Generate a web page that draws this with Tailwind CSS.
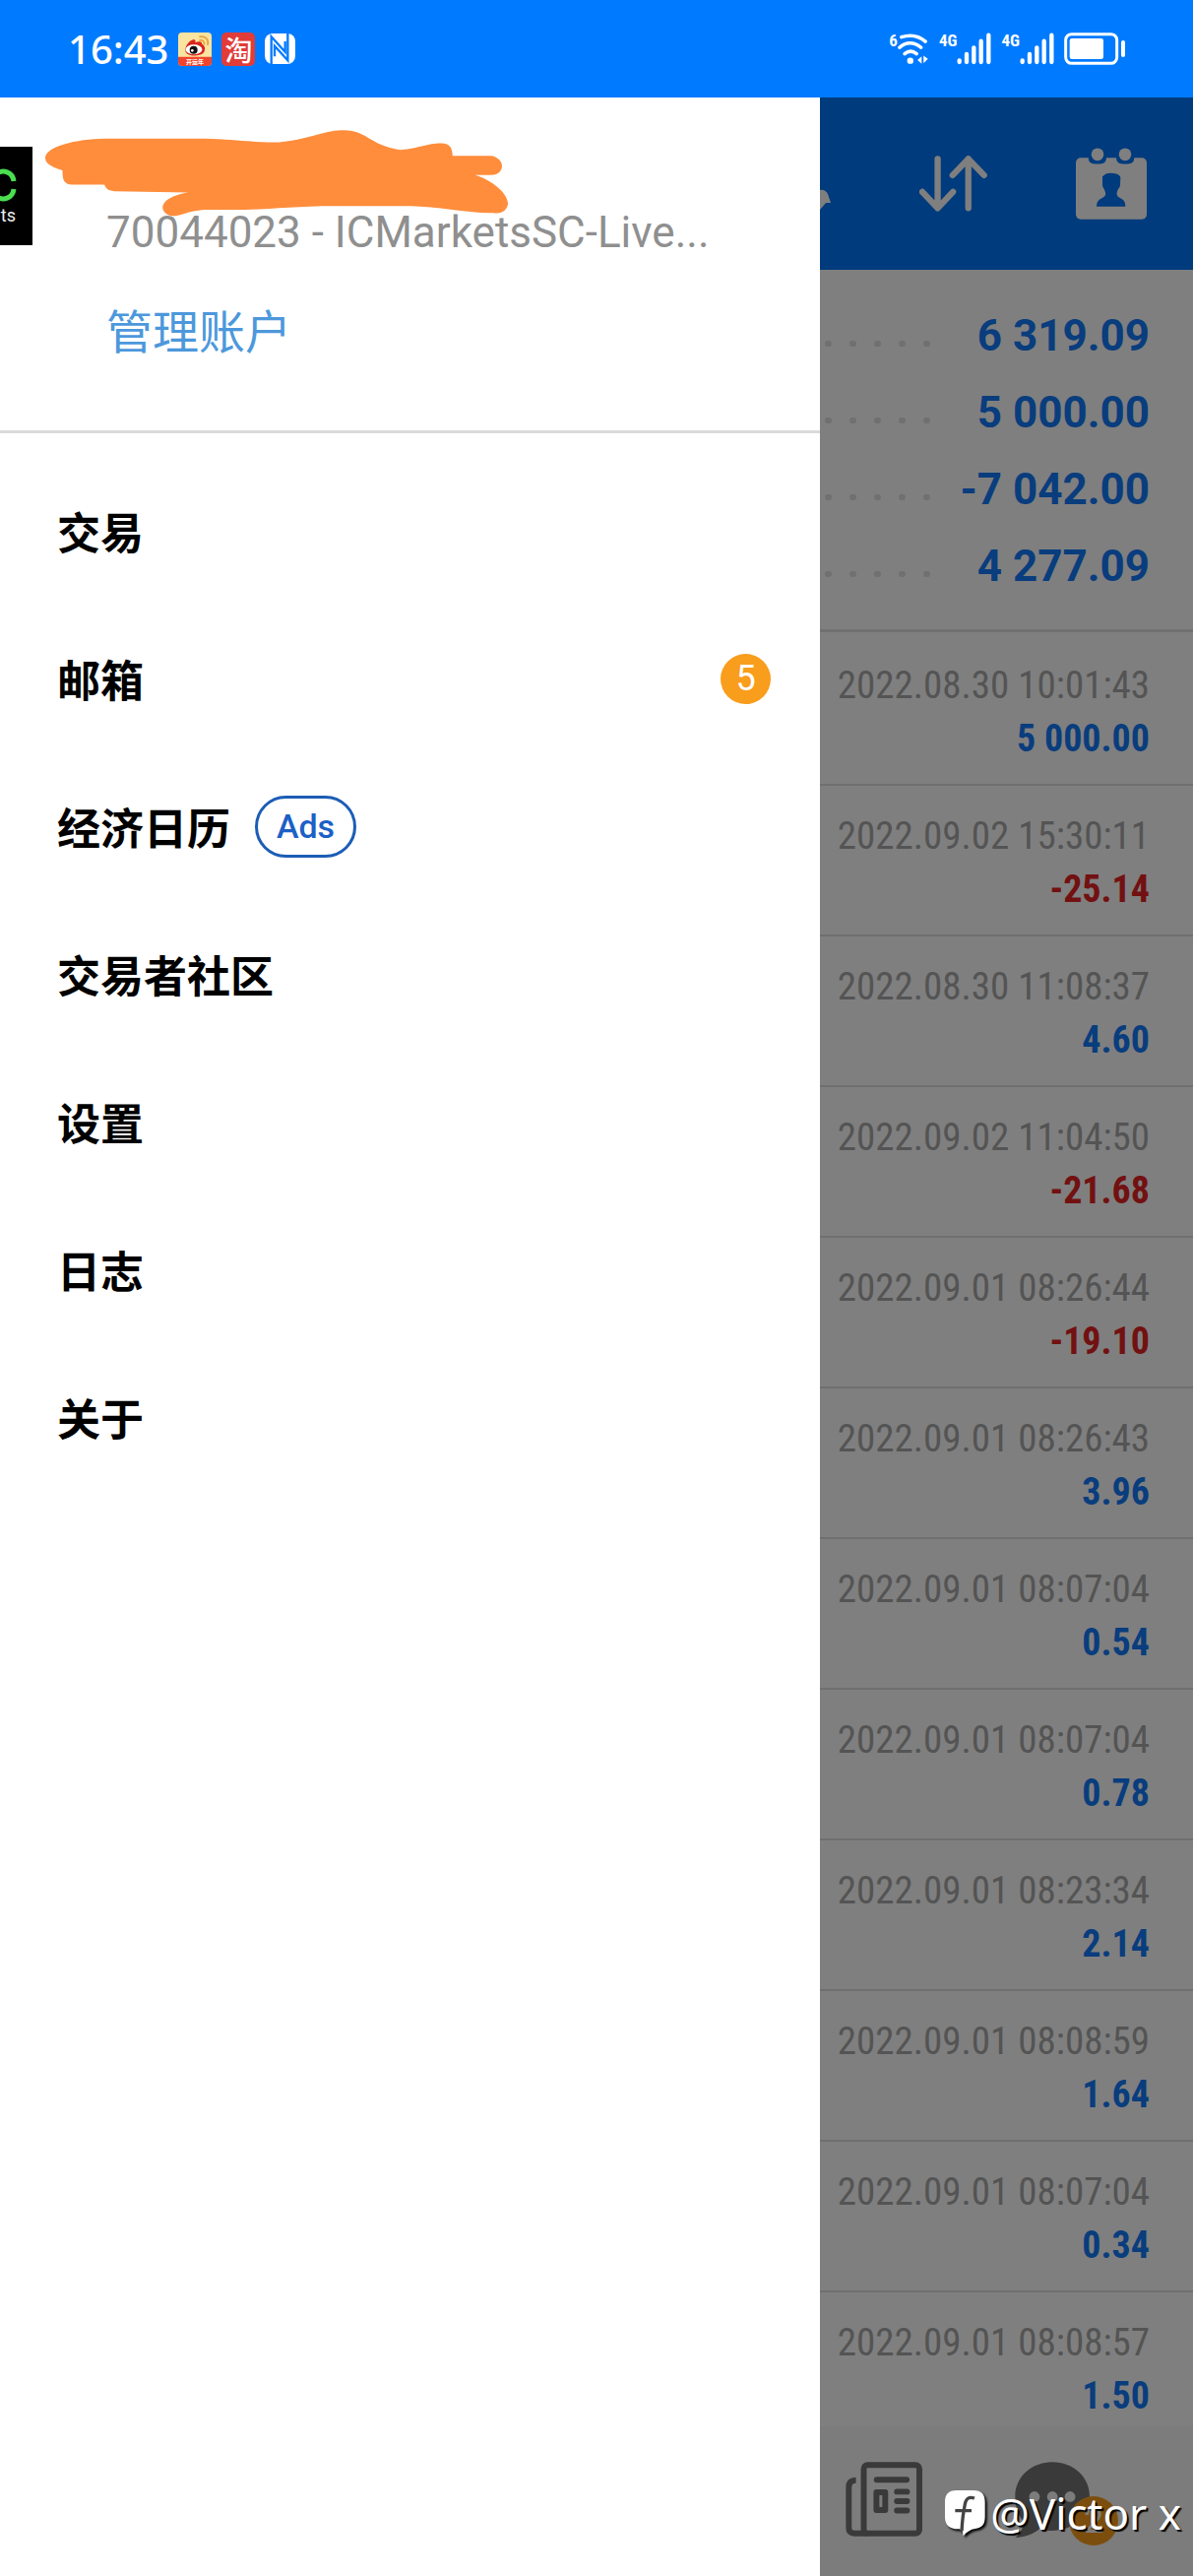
<!DOCTYPE html>
<html lang="zh-CN">
<head>
    <meta charset="UTF-8">
    <meta name="viewport" content="width=device-width, initial-scale=1.0">
    <title>账户</title>
    <script src="https://cdn.jsdelivr.net/npm/@tailwindcss/browser@4"></script>
</head>
<body class="h-screen flex flex-col overflow-hidden bg-white font-[Roboto,'Noto_Sans_CJK_SC',sans-serif]">

    <!-- Status bar -->
    <div class="h-[99px] shrink-0 bg-[#007aff] text-white flex items-center justify-between pl-[69px] pr-[69px]">
        <div class="flex items-center gap-[10px]">
            <span class="font-['Noto_Sans',sans-serif] font-medium text-[40px] leading-[48px]">16:43</span>
            <svg class="w-[34px] h-[34px]" viewBox="0 0 102 102">
                <rect width="102" height="102" rx="12" fill="#fbe3a0"/>
                <path d="M0 74h102v16a12 12 0 0 1-12 12H12A12 12 0 0 1 0 90z" fill="#f0442c"/>
                <path d="M22 54C22 36 40 18 50 22c4 2 3 7 2 9 9-5 22-5 21 5 12 5 10 22 2 28-12 10-53 10-53-10z" fill="#d8261c"/>
                <ellipse cx="48" cy="52" rx="25" ry="15" fill="#fff"/>
                <circle cx="47" cy="53" r="12" fill="#111"/>
                <circle cx="43" cy="55" r="4" fill="#fff"/>
                <path d="M66 13c16-4 28 8 24 24M66 24c9-2 15 4 13 12" fill="none" stroke="#e9a23b" stroke-width="5" stroke-linecap="round"/>
                <text x="51" y="96" text-anchor="middle" font-size="18" font-weight="700" fill="#fff" font-family="Noto Sans CJK SC">开运年</text>
            </svg>
            <span class="w-[34px] h-[34px] rounded-[5px] bg-[#e23c38] text-[28px] leading-[34px] text-center font-medium font-['Noto_Sans_CJK_SC',sans-serif]">淘</span>
            <svg class="w-[31px] h-[31px]" viewBox="0 0 93 93">
                <rect width="93" height="93" rx="24" fill="#fff"/>
                <path d="M20 93V10L62 56V24M70 0V82L30 38V70" fill="none" stroke="#007aff" stroke-width="7"/>
            </svg>
        </div>
        <div class="flex items-center gap-[10px]">
            <div class="flex items-start">
                <span class="font-['Roboto_Condensed',Roboto,sans-serif] font-bold text-[17px] leading-[16px]">6</span>
                <svg class="w-[32px] h-[33px]" viewBox="0 0 100 100">
                    <g fill="none" stroke="#fff" stroke-linecap="round" stroke-width="11">
                        <path d="M12 13c28-9 54-5 76 14"/>
                        <path d="M6 46c20-19 46-19 68 0"/>
                        <path d="M22 66c12-10 26-10 38 0"/>
                    </g>
                    <circle cx="40" cy="88" r="10" fill="#fff"/>
                    <path d="M63 86l13-12v24zM96 82L82 72v24z" fill="#fff"/>
                </svg>
            </div>
            <div class="flex items-start">
                <span class="font-['Roboto_Condensed',Roboto,sans-serif] font-bold text-[17px] leading-[16px]">4G</span>
                <svg class="w-[35px] h-[33px]" viewBox="0 0 105 99" fill="none" stroke="#fff" stroke-width="13" stroke-linecap="round">
                    <path d="M8 85v5M30 66v24M52 46v44M74 26v64M97 8v82"/>
                </svg>
            </div>
            <div class="flex items-start">
                <span class="font-['Roboto_Condensed',Roboto,sans-serif] font-bold text-[17px] leading-[16px]">4G</span>
                <svg class="w-[35px] h-[33px]" viewBox="0 0 105 99" fill="none" stroke="#fff" stroke-width="13" stroke-linecap="round">
                    <path d="M8 85v5M30 66v24M52 46v44M74 26v64M97 8v82"/>
                </svg>
            </div>
            <svg class="w-[62px] h-[33px]" viewBox="0 0 186 99">
                <rect x="5" y="5" width="156" height="89" rx="18" fill="none" stroke="#fff" stroke-width="9"/>
                <rect x="17" y="18" width="103" height="63" rx="7" fill="#fff"/>
                <rect x="174" y="24" width="12" height="51" rx="6" fill="#fff"/>
            </svg>
        </div>
    </div>

    <div class="relative flex-1 min-h-0 flex flex-col">

        <!-- Page header -->
        <header class="h-[175px] shrink-0 bg-[#0076fa] text-white flex items-center justify-end gap-[90px] pr-[47px]">
            <button type="button" aria-label="图表">
                <svg class="block w-[70px] h-[57px]" viewBox="0 0 70 57">
                    <path d="M4 50L30 14l14 28 15-7q5-1 8 4l3 9h-5l-6 7-16 2L28 26 10 54z" fill="currentColor"/>
                </svg>
            </button>
            <button type="button" aria-label="排序">
                <svg class="block w-[69px] h-[57px]" viewBox="342 204 208 172" fill="none" stroke="currentColor" stroke-width="19" stroke-linecap="round" stroke-linejoin="round">
                    <path d="M398 214v151M351 315l47 50 47-50M492 365V214M444 264l48-50 48 50"/>
                </svg>
            </button>
            <button type="button" aria-label="联系人">
                <svg class="block w-[72px] h-[73px]" viewBox="819 175 216 218">
                    <rect x="819" y="205" width="216" height="188" rx="15" fill="currentColor"/>
                    <path d="M857 200h55v4q0 20-20 20h-15q-20 0-20-20zM942 200h55v4q0 20-20 20h-15q-20 0-20-20z" fill="#0076fa"/>
                    <circle cx="885" cy="195" r="19" fill="currentColor"/>
                    <circle cx="969" cy="195" r="19" fill="currentColor"/>
                    <path d="M900 262c8-8 18-11 28-10 14 1 26 5 27 14l-1 22c0 8-6 10-8 17-3 8-3 14 1 18 10 8 23 8 23 31h-88c1-23 14-23 24-31 5-4 4-11 1-18-2-7-7-9-7-17z" fill="#0076fa"/>
                </svg>
            </button>
        </header>

        <!-- Account summary -->
        <dl class="shrink-0 border-b-3 border-[#e0e0e0] pt-[28px] pb-[25px] px-[44px] text-[44px] font-bold text-[#127bfa] text-right">
            <div class="flex h-[78px] items-center">
                <dt class="flex-1 h-[6px] mt-[16px] bg-[radial-gradient(circle,#e0e0e0_3px,transparent_4px)] bg-size-[25px_6px] bg-right"></dt>
                <dd class="w-[214px]">6 319.09</dd>
            </div>
            <div class="flex h-[78px] items-center">
                <dt class="flex-1 h-[6px] mt-[16px] bg-[radial-gradient(circle,#e0e0e0_3px,transparent_4px)] bg-size-[25px_6px] bg-right"></dt>
                <dd class="w-[214px]">5 000.00</dd>
            </div>
            <div class="flex h-[78px] items-center">
                <dt class="flex-1 h-[6px] mt-[16px] bg-[radial-gradient(circle,#e0e0e0_3px,transparent_4px)] bg-size-[25px_6px] bg-right"></dt>
                <dd class="w-[214px]">-7 042.00</dd>
            </div>
            <div class="flex h-[78px] items-center">
                <dt class="flex-1 h-[6px] mt-[16px] bg-[radial-gradient(circle,#e0e0e0_3px,transparent_4px)] bg-size-[25px_6px] bg-right"></dt>
                <dd class="w-[214px]">4 277.09</dd>
            </div>
        </dl>

        <!-- History -->
        <ul class="flex-1 min-h-0 overflow-hidden pt-[3px] text-right text-[39px] leading-[54px] font-['Roboto_Condensed',Roboto,sans-serif]">
            <li class="border-b-2 border-[#dedede] pt-6 pb-[19px] px-[44px]">
                <p class="text-[#a8a8a8]">2022.08.30 10:01:43</p>
                <p class="font-bold text-[38px] text-[#127bfa]">5 000.00</p>
            </li>
            <li class="border-b-2 border-[#dedede] pt-6 pb-[19px] px-[44px]">
                <p class="text-[#a8a8a8]">2022.09.02 15:30:11</p>
                <p class="font-bold text-[38px] text-[#e42222]">-25.14</p>
            </li>
            <li class="border-b-2 border-[#dedede] pt-6 pb-[19px] px-[44px]">
                <p class="text-[#a8a8a8]">2022.08.30 11:08:37</p>
                <p class="font-bold text-[38px] text-[#127bfa]">4.60</p>
            </li>
            <li class="border-b-2 border-[#dedede] pt-6 pb-[19px] px-[44px]">
                <p class="text-[#a8a8a8]">2022.09.02 11:04:50</p>
                <p class="font-bold text-[38px] text-[#e42222]">-21.68</p>
            </li>
            <li class="border-b-2 border-[#dedede] pt-6 pb-[19px] px-[44px]">
                <p class="text-[#a8a8a8]">2022.09.01 08:26:44</p>
                <p class="font-bold text-[38px] text-[#e42222]">-19.10</p>
            </li>
            <li class="border-b-2 border-[#dedede] pt-6 pb-[19px] px-[44px]">
                <p class="text-[#a8a8a8]">2022.09.01 08:26:43</p>
                <p class="font-bold text-[38px] text-[#127bfa]">3.96</p>
            </li>
            <li class="border-b-2 border-[#dedede] pt-6 pb-[19px] px-[44px]">
                <p class="text-[#a8a8a8]">2022.09.01 08:07:04</p>
                <p class="font-bold text-[38px] text-[#127bfa]">0.54</p>
            </li>
            <li class="border-b-2 border-[#dedede] pt-6 pb-[19px] px-[44px]">
                <p class="text-[#a8a8a8]">2022.09.01 08:07:04</p>
                <p class="font-bold text-[38px] text-[#127bfa]">0.78</p>
            </li>
            <li class="border-b-2 border-[#dedede] pt-6 pb-[19px] px-[44px]">
                <p class="text-[#a8a8a8]">2022.09.01 08:23:34</p>
                <p class="font-bold text-[38px] text-[#127bfa]">2.14</p>
            </li>
            <li class="border-b-2 border-[#dedede] pt-6 pb-[19px] px-[44px]">
                <p class="text-[#a8a8a8]">2022.09.01 08:08:59</p>
                <p class="font-bold text-[38px] text-[#127bfa]">1.64</p>
            </li>
            <li class="border-b-2 border-[#dedede] pt-6 pb-[19px] px-[44px]">
                <p class="text-[#a8a8a8]">2022.09.01 08:07:04</p>
                <p class="font-bold text-[38px] text-[#127bfa]">0.34</p>
            </li>
            <li class="pt-6 px-[44px]">
                <p class="text-[#a8a8a8]">2022.09.01 08:08:57</p>
                <p class="font-bold text-[38px] text-[#127bfa]">1.50</p>
            </li>
        </ul>

        <!-- Tab bar -->
        <nav class="h-[152px] shrink-0 bg-[#f8f8f8] text-[#757575] flex items-center justify-end gap-[94px] pr-[104px] pb-[4px]">
            <button type="button" aria-label="新闻">
                <svg class="block w-[78px] h-[76px]" viewBox="118 510 236 228" fill="none" stroke="currentColor">
                    <rect x="174" y="519" width="171" height="210" rx="12" stroke-width="18"/>
                    <path d="M150 566q-22 0-22 22v124q0 17 17 17h40" stroke-width="18"/>
                    <path d="M214 564h92M276 601h31M276 630h31M276 659h31" stroke-width="18" stroke-linecap="round"/>
                    <rect x="213" y="603" width="27" height="54" stroke-width="18" stroke-linejoin="round"/>
                </svg>
            </button>
            <button type="button" aria-label="消息" class="relative">
                <svg class="block w-[77px] h-[77px]" viewBox="638 510 226 228">
                    <path d="M750 511c62 0 112 44 112 103s-50 103-112 103c-14 0-26-2-38-6-20 16-46 26-74 27 14-10 24-28 26-47-16-19-26-45-26-77 0-59 50-103 112-103z" fill="currentColor"/>
                    <g fill="#f8f8f8"><circle cx="696" cy="615" r="16"/><circle cx="750" cy="615" r="16"/><circle cx="803" cy="615" r="16"/></g>
                </svg>
                <span class="absolute left-[55px] top-[35px] w-[50px] h-[50px] rounded-full bg-[#f99d1c] text-white text-[36px] leading-[50px] text-center">2</span>
            </button>
        </nav>

        <!-- Dimmed backdrop -->
        <div class="absolute inset-0 bg-black/50"></div>

        <!-- Drawer -->
        <aside class="absolute inset-y-0 left-0 w-[833px] bg-white overflow-hidden">
            <div class="h-[341px] border-b-3 border-[#d9dada] flex gap-[75px]">
                <svg class="w-[33px] h-[100px] mt-[50px] shrink-0" viewBox="0 0 33 100">
                    <rect width="33" height="100" fill="#000"/>
                    <path d="M-4 28C3 22 13 26 14 35M-4 50C3 56 13 52 14 43" fill="none" stroke="#4ade50" stroke-width="5"/>
                    <text x="16" y="76" text-anchor="end" font-size="18" fill="#eee" font-family="Roboto">ts</text>
                </svg>
                <div class="relative flex-1 min-w-0 pt-[109px] pr-[90px]">
                    <!-- Redaction scribble -->
                    <svg class="absolute -left-[63px] top-[33px] w-[472px] h-[88px]" viewBox="93 95 974 262" preserveAspectRatio="none">
                        <path d="M95 180C95 145 160 122 220 121H430C500 124 540 134 585 132 640 126 680 97 715 96 770 92 770 140 840 155 880 150 895 135 925 135 945 136 948 150 949 173H1030C1060 180 1060 230 1030 231H996C1030 245 1065 285 1065 320 1060 346 1050 347 1030 346 970 345 920 326 860 325H700C620 325 560 336 500 336H430C390 340 380 356 360 355 335 350 325 300 395 284L240 280C225 278 222 270 219 260H150C130 258 132 235 131 217 115 210 95 200 95 180Z" fill="#ff8d3c"/>
                    </svg>
                    <p class="truncate text-[44px] leading-[56px] text-[#8f8f8f]">70044023 - ICMarketsSC-Live...</p>
                    <a href="#" class="block mt-[41px] text-[47px] leading-[66px] text-[#4c98dc]">管理账户</a>
                </div>
            </div>
            <nav class="pt-6 text-[44px] font-bold text-black font-['Noto_Sans_CJK_SC',sans-serif]">
                <a href="#" class="flex items-center h-[150px] pl-[58px] pr-[50px]">交易</a>
                <a href="#" class="flex items-center justify-between h-[150px] pl-[58px] pr-[50px]">
                    邮箱
                    <span class="w-[51px] h-[51px] rounded-full bg-[#f99d1c] text-white text-[36px] leading-[51px] text-center font-normal font-[Roboto,sans-serif]">5</span>
                </a>
                <a href="#" class="flex items-center gap-[25px] h-[150px] pl-[58px] pr-[50px]">
                    经济日历
                    <span class="w-[103px] h-[63px] rounded-full border-3 border-[#1c5db5] text-[#1c60c6] text-[34px] leading-[57px] text-center font-medium font-[Roboto,sans-serif]">Ads</span>
                </a>
                <a href="#" class="flex items-center h-[150px] pl-[58px] pr-[50px]">交易者社区</a>
                <a href="#" class="flex items-center h-[150px] pl-[58px] pr-[50px]">设置</a>
                <a href="#" class="flex items-center h-[150px] pl-[58px] pr-[50px]">日志</a>
                <a href="#" class="flex items-center h-[150px] pl-[58px] pr-[50px]">关于</a>
            </nav>
        </aside>

        <!-- Watermark -->
        <div class="absolute right-[12px] bottom-[32px] flex items-center gap-[3px] text-white">
            <svg class="w-[44px] h-[48px] drop-shadow-[2px_2px_1px_#000]" viewBox="406 600 132 144">
                <path d="M444 603h52c24 0 35 12 35 36v44c0 24-9 34-30 37-14 2-26 10-36 22-2-12-2-20-14-21-30-1-42-12-42-38v-44c0-24 11-36 35-36z" fill="#fff"/>
                <path d="M499 627c-18-6-26 2-29 18l-6 36c-2 16-3 30-4 46M440 665h50" fill="none" stroke="#444" stroke-width="10"/>
            </svg>
            <span class="font-['Noto_Sans',sans-serif] font-normal text-[44px] leading-[64px] [text-shadow:2px_2px_1px_#000]">@Victor x</span>
        </div>
    </div>
</body>
</html>
